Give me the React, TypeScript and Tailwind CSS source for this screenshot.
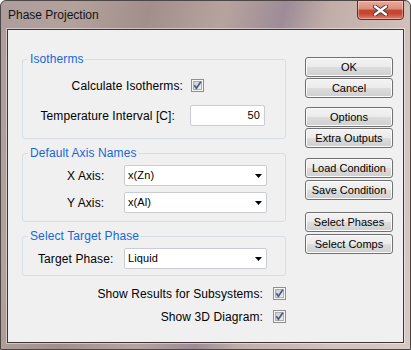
import type { ReactNode } from "react";

function CheckBox() {
  return (
    <svg width="13" height="13" viewBox="0 0 13 13" className="block shrink-0">
      <defs>
        <linearGradient id="cbFill" x1="0" y1="0" x2="1" y2="1">
          <stop offset="0" stopColor="#cbcbcb" />
          <stop offset="1" stopColor="#f2f2f2" />
        </linearGradient>
      </defs>
      <rect x="0.5" y="0.5" width="12" height="12" fill="#f6f6f6" stroke="#8e8f8f" />
      <rect x="2.5" y="2.5" width="8" height="8" fill="url(#cbFill)" stroke="#adadad" />
      <path d="M3.3 6.3 L5.4 9.2 L9.8 2.8" fill="none" stroke="#4b5a86" strokeWidth="1.7" />
    </svg>
  );
}

function Combo({ value }: { value: string }) {
  return (
    <div className="h-[21px] w-[143px] bg-white border border-[#c9ccd2] rounded-[2px] flex items-center pl-[3px] pr-[4px] text-[11px]">
      <span className="flex-1 leading-[13px]">{value}</span>
      <svg width="7" height="4" viewBox="0 0 7 4" className="block">
        <path d="M0 0H7L3.5 4Z" fill="#000" />
      </svg>
    </div>
  );
}

function Btn({ children, className = "" }: { children: ReactNode; className?: string }) {
  return (
    <div
      className={`h-[20px] w-[88px] rounded-[3px] border border-[#707070] bg-[linear-gradient(#f3f3f3_0%,#ebebeb_50%,#dddddd_50%,#cfcfcf_100%)] shadow-[inset_0_0_0_1px_#fbfbfb] flex items-center justify-center text-[11px] leading-[13px] ${className}`}
    >
      {children}
    </div>
  );
}

function Group({ title, children, className = "" }: { title: string; children: ReactNode; className?: string }) {
  return (
    <fieldset className={`border border-[#d5dfe5] rounded-[3px] ${className}`}>
      <legend className="ml-[5px] pl-[2px] pr-[1px] leading-[13px] text-[#1668d8]">{title}</legend>
      {children}
    </fieldset>
  );
}

export default function App() {
  return (
    <div className="w-[411px] h-[350px] bg-white font-['Liberation_Sans',Arial,sans-serif] text-[12px] tracking-[0.1px] text-black">
      <div className="w-full h-full rounded-t-[6px] border border-[#4e4545] bg-[linear-gradient(105deg,#ad9d9c_0%,#b3a19c_15%,#a28f8c_30%,#b7a39e_45%,#9d8c98_57%,#c2aea8_66%,#d4c2bc_85%,#d8c8c2_100%)] flex flex-col">
        {/* title bar */}
        <div className="h-[28px] shrink-0 flex items-start">
          <span className="ml-[7px] mt-[7px] text-[12px] leading-[15px] tracking-normal text-[#141414]">Phase Projection</span>
          <div className="ml-auto mr-[6px] -mt-[1px] h-[20px] w-[47px] rounded-b-[4px] border border-[#5a2e2a] bg-[linear-gradient(#e9aa9a_0%,#dc8c7a_45%,#c7462f_50%,#c64632_70%,#e0806a_100%)] shadow-[inset_0_0_0_1px_rgba(255,255,255,0.35)] flex items-center justify-center">
            <svg width="15" height="11" viewBox="0 0 15 11" className="block">
              <path d="M2 1.5 L13 9.5 M13 1.5 L2 9.5" stroke="#3b3b3b" strokeWidth="4.2" strokeLinecap="round" />
              <path d="M2 1.5 L13 9.5 M13 1.5 L2 9.5" stroke="#ffffff" strokeWidth="2.4" strokeLinecap="round" />
            </svg>
          </div>
        </div>

        {/* client area */}
        <div className="mx-[6px] h-[314px] shrink-0 border border-[#3f3535] bg-[#f0f0f0] shadow-[0_0_0_1px_rgba(255,255,255,0.45)] flex">
          <div className="ml-[14px] w-[264px] mt-[23px] flex flex-col">
            <Group title="Isotherms" className="pb-[12px]">
              <div className="mt-[13px] h-[13px] flex items-center">
                <span className="w-[160px] text-right">Calculate Isotherms:</span>
                <span className="ml-[8px]">
                  <CheckBox />
                </span>
              </div>
              <div className="mt-[13px] h-[21px] flex items-center">
                <span className="w-[152px] text-right">Temperature Interval [C]:</span>
                <div className="ml-[15px] h-[21px] w-[75px] bg-white border border-[#c9ccd2] rounded-[2px] flex items-center justify-end pr-[4px] text-[11px] leading-[13px]">
                  50
                </div>
              </div>
            </Group>

            <Group title="Default Axis Names" className="mt-[8px] pb-[8px]">
              <div className="mt-[5px] flex items-center">
                <span className="w-[101px] pl-[44px]">X Axis:</span>
                <Combo value="x(Zn)" />
              </div>
              <div className="mt-[6px] flex items-center">
                <span className="w-[101px] pl-[44px]">Y Axis:</span>
                <Combo value="x(Al)" />
              </div>
            </Group>

            <Group title="Select Target Phase" className="mt-[8px] pb-[6px]">
              <div className="mt-[5px] flex items-center">
                <span className="w-[101px] pl-[15px]">Target Phase:</span>
                <Combo value="Liquid" />
              </div>
            </Group>

            <div className="mt-[11px] h-[13px] flex items-center justify-end">
              <span>Show Results for Subsystems:</span>
              <span className="ml-[10px]">
                <CheckBox />
              </span>
            </div>
            <div className="mt-[10px] h-[13px] flex items-center justify-end">
              <span>Show 3D Diagram:</span>
              <span className="ml-[10px]">
                <CheckBox />
              </span>
            </div>
          </div>

          <div className="ml-[19px] mt-[27px] flex flex-col tracking-normal">
            <Btn>OK</Btn>
            <Btn className="mt-[1px]">Cancel</Btn>
            <Btn className="mt-[9px]">Options</Btn>
            <Btn className="mt-[1px]">Extra Outputs</Btn>
            <Btn className="mt-[10px]">Load Condition</Btn>
            <Btn className="mt-[2px]">Save Condition</Btn>
            <Btn className="mt-[12px]">Select Phases</Btn>
            <Btn className="mt-[2px]">Select Comps</Btn>
          </div>
        </div>
      </div>
    </div>
  );
}
